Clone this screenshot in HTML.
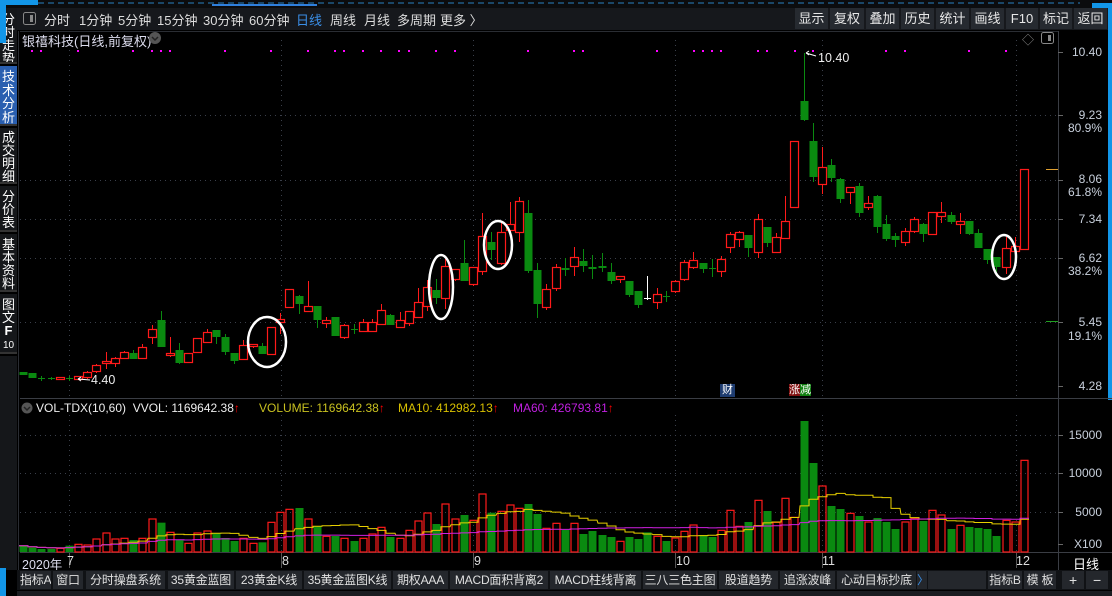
<!DOCTYPE html>
<html><head><meta charset="utf-8"><style>
*{margin:0;padding:0;box-sizing:border-box}
body{width:1112px;height:596px;background:#000;overflow:hidden;position:relative;font-family:"Liberation Sans","Noto Sans CJK SC",sans-serif;font-size:12px;color:#ddd}
.a{position:absolute;white-space:nowrap}
.tb{background:#16181c}
.btn{position:absolute;top:8px;height:21px;background:#262a30;color:#e8e8e8;font-size:13px;text-align:center;line-height:21px;white-space:nowrap}
.bb{position:absolute;top:571px;height:18px;background:#24272c;color:#e0e0e0;font-size:12px;text-align:center;line-height:18px;white-space:nowrap;overflow:hidden;letter-spacing:-0.2px}
.side{position:absolute;left:0;width:17px;background:#15171a;color:#fff;font-size:12px;line-height:13px;text-align:center;border-bottom:2px solid #333;overflow:hidden}
.ax{position:absolute;right:10px;color:#c8d0dc;font-size:12px;text-align:right}
</style></head><body>
<div class="a" style="left:0;top:0;width:1112px;height:8px;background:#0b0c0e"></div>
<svg class="a" style="left:0;top:0" width="1112" height="8"><line x1="38" y1="3" x2="1080" y2="3" stroke="#2a7fc0" stroke-dasharray="6,4"/><rect x="0" y="0" width="38" height="5" fill="#1296e8"/><rect x="212" y="4" width="105" height="2" fill="#2f7fdc"/><rect x="1092" y="3" width="20" height="5" fill="#1296e8"/></svg>
<div class="a tb" style="left:17px;top:8px;width:1095px;height:22px"></div>
<svg class="a" style="left:23px;top:12px" width="13" height="13"><rect x="0.5" y="0.5" width="12" height="12" rx="2" fill="none" stroke="#888"/><rect x="7" y="3" width="3" height="7" fill="#888"/></svg>
<div class="a" style="left:44px;top:10px;font-size:13px;color:#e0e0e0">分时</div>
<div class="a" style="left:79px;top:10px;font-size:13px">1分钟</div>
<div class="a" style="left:118px;top:10px;font-size:13px">5分钟</div>
<div class="a" style="left:157px;top:10px;font-size:13px">15分钟</div>
<div class="a" style="left:203px;top:10px;font-size:13px">30分钟</div>
<div class="a" style="left:249px;top:10px;font-size:13px">60分钟</div>
<div class="a" style="left:296px;top:10px;font-size:13px;color:#3a8ee6">日线</div>
<div class="a" style="left:330px;top:10px;font-size:13px">周线</div>
<div class="a" style="left:364px;top:10px;font-size:13px">月线</div>
<div class="a" style="left:397px;top:10px;font-size:13px">多周期</div>
<div class="a" style="left:440px;top:10px;font-size:13px">更多 〉</div>
<div class="btn" style="left:795px;width:33px">显示</div>
<div class="btn" style="left:830px;width:34px">复权</div>
<div class="btn" style="left:866px;width:33px">叠加</div>
<div class="btn" style="left:901px;width:33px">历史</div>
<div class="btn" style="left:936px;width:33px">统计</div>
<div class="btn" style="left:971px;width:33px">画线</div>
<div class="btn" style="left:1006px;width:32px">F10</div>
<div class="btn" style="left:1040px;width:32px">标记</div>
<div class="btn" style="left:1074px;width:33px">返回</div>
<div class="a" style="left:1108px;top:5px;width:4px;height:395px;background:#1296e8"></div>

<div class="side" style="top:8px;height:56px;padding-top:5px;font-size:13px;line-height:13px">分<br>时<br>走<br>势</div>
<div class="a" style="left:0;top:5px;width:6px;height:38px;background:#1296e8"></div>
<div class="side" style="top:66px;height:60px;background:#2a5fb0;padding-top:4px;font-size:13px;line-height:13.5px">技<br>术<br>分<br>析</div>
<div class="side" style="top:128px;height:56px;padding-top:3px;font-size:13px;line-height:13px">成<br>交<br>明<br>细</div>
<div class="side" style="top:186px;height:46px;padding-top:4px;font-size:13px;line-height:13px">分<br>价<br>表</div>
<div class="side" style="top:234px;height:58px;padding-top:4px;font-size:13px;line-height:13px">基<br>本<br>资<br>料</div>
<div class="side" style="top:294px;height:60px;padding-top:4px;font-size:13px;line-height:13px">图<br>文<br><b>F</b><br><span style="font-size:10px">10</span></div>
<div class="side" style="top:356px;height:214px;border:none"></div>
<div class="a" style="left:0;top:568px;width:6px;height:28px;background:#1296e8"></div>

<svg id="ch" class="a" style="left:0;top:0" width="1112" height="596"></svg>

<div class="a" style="left:22px;top:31px;font-size:13px;color:#dde">银禧科技(日线,前复权)</div>
<svg class="a" style="left:149px;top:32px" width="12" height="12"><circle cx="6" cy="6" r="6" fill="#555"/><path d="M3 5l3 3 3-3" stroke="#222" stroke-width="1.5" fill="none"/></svg>
<div class="a" style="left:1022px;top:31px;color:#888;font-size:12px">◇</div>
<svg class="a" style="left:1041px;top:32px" width="13" height="12"><rect x="0.5" y="0.5" width="12" height="11" rx="2" fill="none" stroke="#888"/><rect x="7" y="3" width="3" height="6" fill="#888"/></svg>
<div class="a" style="left:818px;top:51px;font-size:12.5px;color:#eee">10.40</div>
<div class="a" style="left:91px;top:373px;font-size:12.5px;color:#eee">4.40</div>
<div class="a" style="left:720px;top:384px;background:#1e3c70;color:#fff;font-size:11px;padding:0 2px;line-height:13px">财</div>
<div class="a" style="left:789px;top:384px;font-size:11px;line-height:13px"><span style="background:#801010;color:#fff">涨</span><span style="background:#108010;color:#fff">减</span></div>

<div class="ax" style="top:45px">10.40</div>
<div class="ax" style="top:108px">9.23</div>
<div class="ax" style="top:121px">80.9%</div>
<div class="ax" style="top:172px">8.06</div>
<div class="ax" style="top:185px">61.8%</div>
<div class="ax" style="top:212px">7.34</div>
<div class="ax" style="top:251px">6.62</div>
<div class="ax" style="top:264px">38.2%</div>
<div class="ax" style="top:315px">5.45</div>
<div class="ax" style="top:329px">19.1%</div>
<div class="ax" style="top:379px">4.28</div>
<div class="ax" style="top:428px">15000</div>
<div class="ax" style="top:466px">10000</div>
<div class="ax" style="top:505px">5000</div>
<div class="ax" style="top:537px">X100</div>

<svg class="a" style="left:21px;top:402px" width="12" height="12"><circle cx="6" cy="6" r="5.5" fill="#555"/><path d="M3 5l3 3 3-3" stroke="#222" stroke-width="1.5" fill="none"/></svg>
<div class="a" style="left:36px;top:401px;font-size:12px;color:#eee">VOL-TDX(10,60)&nbsp; VVOL: 1169642.38<span style="color:#f00">↑</span></div>
<div class="a" style="left:259px;top:401px;font-size:12px;color:#c8c020">VOLUME: 1169642.38<span style="color:#f00">↑</span></div>
<div class="a" style="left:398px;top:401px;font-size:12px;color:#d8c000">MA10: 412982.13<span style="color:#f00">↑</span></div>
<div class="a" style="left:513px;top:401px;font-size:12px;color:#c020e0">MA60: 426793.81<span style="color:#f00">↑</span></div>

<div class="a" style="left:22px;top:554px;font-size:12.5px;color:#dde">2020年</div>
<div class="a" style="left:67px;top:554px;font-size:12.5px">7</div>
<div class="a" style="left:282px;top:554px;font-size:12.5px">8</div>
<div class="a" style="left:474px;top:554px;font-size:12.5px">9</div>
<div class="a" style="left:676px;top:554px;font-size:12.5px">10</div>
<div class="a" style="left:822px;top:554px;font-size:12.5px">11</div>
<div class="a" style="left:1016px;top:554px;font-size:12.5px">12</div>
<div class="a" style="left:1073px;top:554px;font-size:13px;color:#fff">日线</div>

<div class="a" style="left:17px;top:570px;width:1095px;height:20px;background:#101215"></div>
<div class="bb" style="left:20px;width:31px">指标A</div>
<div class="bb" style="left:53px;width:30px">窗口</div>
<div class="bb" style="left:86px;width:79px">分时操盘系统</div>
<div class="bb" style="left:168px;width:66px">35黄金蓝图</div>
<div class="bb" style="left:236px;width:66px">23黄金K线</div>
<div class="bb" style="left:304px;width:87px">35黄金蓝图K线</div>
<div class="bb" style="left:393px;width:55px">期权AAA</div>
<div class="bb" style="left:450px;width:98px">MACD面积背离2</div>
<div class="bb" style="left:550px;width:91px">MACD柱线背离</div>
<div class="bb" style="left:643px;width:74px">三八三色主图</div>
<div class="bb" style="left:719px;width:59px">股道趋势</div>
<div class="bb" style="left:780px;width:55px">追涨波峰</div>
<div class="bb" style="left:837px;width:79px">心动目标抄底</div>
<div class="bb" style="left:917px;width:10px;color:#3a8ee6">〉</div>
<div class="bb" style="left:928px;width:58px"></div>
<div class="bb" style="left:988px;width:34px">指标B</div>
<div class="bb" style="left:1024px;width:32px">模 板</div>
<div class="bb" style="left:1062px;width:22px;font-size:14px">+</div>
<div class="bb" style="left:1086px;width:22px;font-size:14px">−</div>
<div class="a" style="left:17px;top:591px;width:1095px;height:5px;background:#1a1c20"></div>

<script>
var C=[
[372,374,372,374,0],[373,377,373,377,0],[378,378,376,380,0],[378,378,377,379,0],[377,379,377,379,1],[378,378,376,380,0],[376,379,376,379,1],[372,377,371,378,1],[365,371,364,372,1],[361,363,352,368,1],
[358,363,357,366,1],[352,358,351,358,1],[353,358,350,358,0],[347,358,344,358,1],[329,337,325,343,1],[320,346,311,346,0],[353,355,337,356,1],[350,362,343,363,0],[353,362,353,362,1],[338,352,338,352,1],
[332,342,329,342,1],[330,336,330,343,0],[337,351,334,354,0],[353,360,353,363,0],[345,359,340,359,1],[344,346,344,347,1],[346,353,343,353,0],[327,354,327,354,1],[319,322,313,333,1],[289,307,289,307,1],
[296,303,295,313,0],[306,311,281,311,1],[306,319,306,327,0],[320,323,317,327,1],[317,335,317,335,0],[325,337,324,338,1],[329,329,324,333,0],[322,331,319,331,1],[322,331,319,331,1],[310,324,304,324,1],
[315,324,314,324,0],[320,327,312,327,1],[311,323,311,325,1],[302,317,288,317,1],[287,306,280,310,1],[290,297,279,303,0],[266,298,259,308,1],[269,279,269,280,1],[263,280,240,280,0],[267,284,267,285,1],
[236,271,213,274,1],[242,249,232,259,0],[232,263,222,264,1],[224,230,202,235,1],[201,232,197,241,1],[213,270,200,272,0],[270,303,263,317,0],[289,307,284,309,1],[267,288,264,290,1],[268,269,258,275,0],
[257,266,247,275,1],[261,265,249,271,0],[267,268,255,278,0],[266,267,253,271,0],[272,280,263,283,0],[276,279,276,282,1],[281,294,281,296,0],[291,304,291,307,0],[298,298,276,299,2],[294,302,288,308,1],
[296,296,291,301,0],[281,291,280,292,1],[262,279,260,280,1],[260,267,252,268,1],[263,268,263,272,0],[268,268,259,276,0],[259,271,256,276,1],[234,247,232,252,1],[232,239,231,246,1],[235,247,235,256,0],
[219,252,214,257,1],[227,242,227,246,0],[237,252,233,252,1],[221,238,196,238,1],[141,207,141,207,1],[101,119,53,120,0],[141,176,123,181,0],[167,184,147,193,1],[165,177,159,181,0],[179,198,178,202,0],
[187,192,187,203,1],[186,212,183,216,0],[203,207,196,209,1],[196,226,195,232,0],[224,238,215,240,0],[236,239,233,246,0],[231,242,228,245,1],[219,231,217,232,1],[224,233,223,241,0],[212,234,212,234,1],
[212,216,202,222,1],[215,221,212,223,0],[221,224,213,233,1],[221,233,221,234,0],[233,247,229,247,0],[249,259,249,263,0],[257,266,257,272,0],[248,267,237,273,1],[246,251,237,253,1],[169,249,169,249,1]];
var V=[392,398,402,402,400,392,388,390,372,354,372,370,375,370,312,323,352,375,385,354,348,355,369,378,370,385,382,322,292,283,279,312,333,364,363,370,378,370,357,337,366,370,346,318,294,327,267,312,300,316,237,293,289,270,280,267,297,
340,325,345,325,357,348,360,366,379,366,372,352,364,378,369,349,330,360,366,346,286,334,321,256,288,322,250,307,18,144,213,273,282,295,303,321,309,321,342,321,311,318,286,300,342,331,336,339,342,363,316,321,136];
var s='';
function L(x1,y1,x2,y2,c,e){s+='<line x1="'+x1+'" y1="'+y1+'" x2="'+x2+'" y2="'+y2+'" stroke="'+c+'" '+(e||'')+'/>';}
var dot='stroke-dasharray="1,4"';
L(20,31.5,1058,31.5,'#2a2d33');L(18.5,31,18.5,590,'#2a2d33');L(1058.5,31,1058.5,570,'#3a3d44');
L(20,398.5,1112,398.5,'#3a3d44');L(20,552.5,1112,552.5,'#3a3d44');L(20,570.5,1112,570.5,'#3a3d44');
[115,180,219,258,322].forEach(function(y){L(20,y+.5,1058,y+.5,'#3a3f4a',dot);});
[435,473,512].forEach(function(y){L(20,y+.5,1058,y+.5,'#3a3f4a',dot);});
[69,281,473,675,822,1016].forEach(function(x){L(x+.5,40,x+.5,398,'#3a3f4a',dot);L(x+.5,415,x+.5,552,'#3a3f4a',dot);L(x+.5,553,x+.5,568,'#555');});
[52,115,180,219,258,322,386,435,473,512,544].forEach(function(y){L(1058,y+.5,1063,y+.5,'#666');});
L(1046,169.5,1058,169.5,'#e0a030');L(1046,321.5,1058,321.5,'#20a020');
[32,41,78,133,152,161,170,225,271,308,335,344,363,381,399,409,436,455,528,574,583,657,694,703,712,721,758,767,795,813,886,905,969,1006].forEach(function(x){s+='<rect x="'+(x-1)+'" y="50" width="2" height="2" fill="#f0f"/>';});
var R='#ff1a1a',G='#0a8a10';
var n=C.length,sp=(1024-23)/(n-1);
var vv=[];
for(var i=0;i<n;i++){var x=Math.round(23+i*sp),c=C[i];var col=c[4]==1?R:(c[4]==2?'#fff':G);
 var t=Math.min(c[0],c[1]),b=Math.max(c[0],c[1]);
 L(x+.5,c[2],x+.5,c[3]+1,col,'stroke-width="1"');
 if(b-t<1){L(x-3,t+.5,x+4,t+.5,col);}
 else if(c[4]==1){s+='<rect x="'+(x-3.5)+'" y="'+(t+.5)+'" width="8" height="'+(b-t)+'" fill="#000" stroke="'+R+'" stroke-width="1.2"/>';}
 else s+='<rect x="'+(x-3.5)+'" y="'+t+'" width="8" height="'+(b-t+1)+'" fill="'+col+'"/>';
 var vt=415+V[i]/3;vv.push(552-vt);
 if(c[4]==1)s+='<rect x="'+(x-3)+'" y="'+vt+'" width="7" height="'+(552-vt)+'" fill="none" stroke="'+R+'" stroke-width="1.2"/>';
 else s+='<rect x="'+(x-3.5)+'" y="'+vt+'" width="8" height="'+(552-vt)+'" fill="'+G+'"/>';
}
function ma(k,col){var p='';for(var i=0;i<n;i++){var a=0,m=0;for(var j=Math.max(0,i-k+1);j<=i;j++){a+=vv[j];m++;}var x=Math.round(23+i*sp);var y=(552-a/m).toFixed(1);p+=(i?'L':'M')+(x-4)+' '+y+'H'+(x+5);}s+='<path d="'+p+'" fill="none" stroke="'+col+'" stroke-width="1"/>';}
ma(10,'#e8d000');ma(60,'#d020e0');
[[267,342,19,25],[441,287,12,32],[498,245,14,24],[1004,257,12,22]].forEach(function(e){s+='<ellipse cx="'+e[0]+'" cy="'+e[1]+'" rx="'+e[2]+'" ry="'+e[3]+'" fill="none" stroke="#fff" stroke-width="2.5"/>';});
s+='<path d="M806 53 L816 56 M806 53 l3 -2 M806 53 l3 2" stroke="#fff" fill="none"/>';
s+='<path d="M78 379 L90 380 M78 379 l3 -2 M78 379 l3 2" stroke="#fff" fill="none"/>';
document.getElementById('ch').innerHTML=s;
</script>
</body></html>
